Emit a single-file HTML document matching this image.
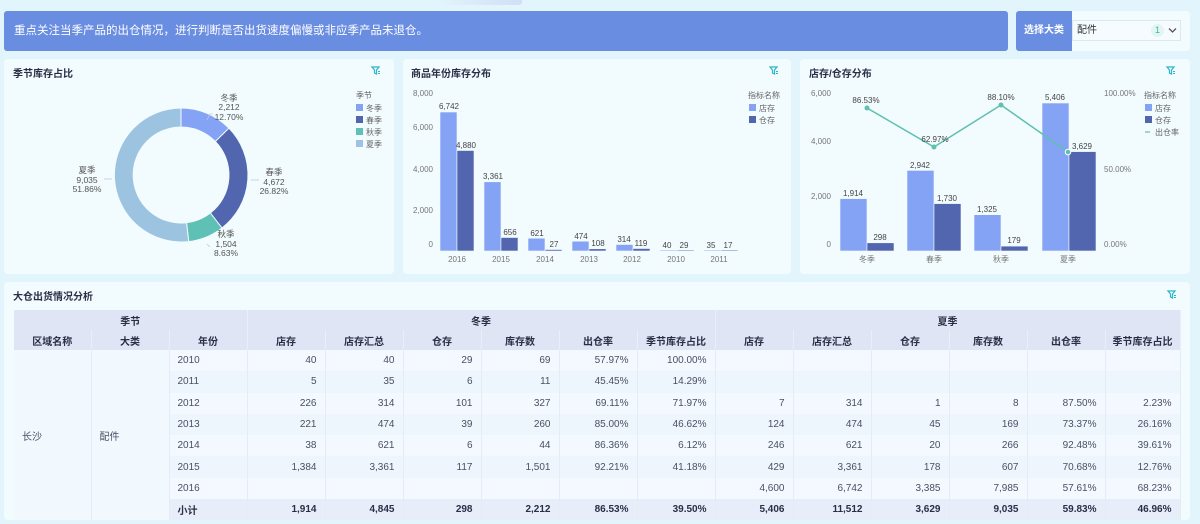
<!DOCTYPE html>
<html><head><meta charset="utf-8"><style>
*{margin:0;padding:0;box-sizing:border-box}
body{width:1200px;height:524px;background:#e2f5fc;font-family:"Liberation Sans","Noto Sans CJK SC",sans-serif;position:relative;overflow:hidden;color:#333}
.p{position:absolute;background:#f2fbfe;border-radius:4px}
.t{position:absolute;font-size:10px;font-weight:bold;color:#2a2f45}
svg text{font-family:"Liberation Sans","Noto Sans CJK SC",sans-serif}
table{position:absolute;left:14px;top:310px;border-collapse:collapse;table-layout:fixed;font-size:10px}
td,th{height:21.3px;border-right:1px solid #e4ecf6;padding:0 8px;color:#4a4f63;white-space:nowrap;overflow:hidden}
th{height:20px;background:#dfe5f4;font-weight:bold;color:#2a2f45;text-align:center;border-right:1px solid #e9eef8;padding:0 4px}
td{text-align:right}
tr.a td{background:#eef6fd}
tr.b td{background:#f3f9fe}
tr.s td{background:#e7eefa;font-weight:bold;color:#2a2f45}
td.l{text-align:left;background:#f2f9fe!important}
td.y{text-align:left}
</style></head><body>
<div style="position:absolute;left:435px;top:0;width:87px;height:5px;background:linear-gradient(90deg,#e2f5fc,#d3def5);border-radius:0 0 3px 3px"></div>
<div style="position:absolute;left:4px;top:11px;width:1004px;height:40px;background:#698de0;border-radius:3px;color:#fff;font-size:11.5px;line-height:40px;padding-left:10px">重点关注当季产品的出仓情况，进行判断是否出货速度偏慢或非应季产品未退仓。</div>
<div class="p" style="left:1016px;top:11px;width:174px;height:40px"></div>
<div style="position:absolute;left:1016px;top:11px;width:56px;height:40px;background:#698de0;border-radius:3px 0 0 3px;color:#fff;font-size:10px;font-weight:bold;line-height:40px;text-align:center">选择大类</div>
<div style="position:absolute;left:1072px;top:20px;width:109px;height:21px;background:#f5fbff;border:1px solid #dde7f1;font-size:10px;line-height:19px;padding-left:4px;color:#333">配件<span style="position:absolute;left:78px;top:3px;width:13px;height:13px;border-radius:7px;background:#e1f5f2;color:#3cb9a8;font-size:9px;line-height:13px;text-align:center">1</span><svg style="position:absolute;left:95px;top:6px" width="9" height="7"><path d="M1 1.5L4.5 5L8 1.5" stroke="#555" stroke-width="1.3" fill="none"/></svg></div>

<div class="p" style="left:4px;top:59px;width:390px;height:215px"></div>
<div class="p" style="left:403px;top:59px;width:388px;height:215px"></div>
<div class="p" style="left:800px;top:59px;width:390px;height:215px"></div>
<div class="p" style="left:4px;top:282px;width:1186px;height:238px"></div>
<div class="t" style="left:13px;top:65px">季节库存占比</div>
<div class="t" style="left:411px;top:65px">商品年份库存分布</div>
<div class="t" style="left:809px;top:65px">店存/仓存分布</div>
<div class="t" style="left:13px;top:288px">大仓出货情况分析</div>

<svg style="position:absolute;left:0;top:0" width="1200" height="524">
<defs><g id="fi"><path d="M0 0H7L4.5 3V7L2.5 6V3Z" fill="none" stroke="#2ab5c8" stroke-width="1.2"/><path d="M6 4.5H8M6 6.5H8" stroke="#2ab5c8" stroke-width="1"/></g></defs>
<use href="#fi" x="372" y="67"/><use href="#fi" x="770" y="67"/><use href="#fi" x="1167" y="67"/><use href="#fi" x="1168" y="291"/>
<g stroke="#f2fbfe" stroke-width="1">
<path d="M181 108A67 67 0 0 1 228.95 128.2L215.35 141.5A48 48 0 0 0 181 127Z" fill="#85a3f5"/>
<path d="M228.95 128.2A67 67 0 0 1 221.97 228L210.35 213A48 48 0 0 0 215.35 141.5Z" fill="#5266b0"/>
<path d="M221.97 228A67 67 0 0 1 188.7 241.6L186.52 222.7A48 48 0 0 0 210.35 213Z" fill="#5fc0b5"/>
<path d="M188.7 241.6A67 67 0 1 1 181 108L181 127A48 48 0 1 0 186.52 222.7Z" fill="#9cc3e0"/>
</g>
<g font-size="8.5" fill="#555" text-anchor="middle">
<text x="229" y="101">冬季</text><text x="229" y="110">2,212</text><text x="229" y="120">12.70%</text>
<text x="274" y="175">春季</text><text x="274" y="185">4,672</text><text x="274" y="194">26.82%</text>
<text x="226" y="237">秋季</text><text x="226" y="247">1,504</text><text x="226" y="256">8.63%</text>
<text x="87" y="173">夏季</text><text x="87" y="183">9,035</text><text x="87" y="192">51.86%</text>
</g>
<g stroke="#bcd" fill="none" stroke-width=".8"><path d="M207 120L210 114H213"/><path d="M251 180H259"/><path d="M207 244L210 247"/><path d="M104 179H112"/></g>
<g font-size="8" fill="#666"><text x="356" y="98">季节</text>
<rect x="356" y="104" width="7" height="7" fill="#85a3f5"/><text x="366" y="111">冬季</text>
<rect x="356" y="116" width="7" height="7" fill="#5266b0"/><text x="366" y="123">春季</text>
<rect x="356" y="128" width="7" height="7" fill="#5fc0b5"/><text x="366" y="135">秋季</text>
<rect x="356" y="140" width="7" height="7" fill="#9cc3e0"/><text x="366" y="147">夏季</text></g>
<g font-size="8" fill="#777" text-anchor="end"><text x="433" y="96">8,000</text><text x="433" y="130">6,000</text><text x="433" y="172">4,000</text><text x="433" y="213">2,000</text><text x="433" y="247">0</text></g>
<g stroke="#f2fbfe" stroke-width=".6">
<rect x="440" y="112" width="17" height="139" fill="#85a3f5"/><rect x="457" y="150.5" width="17" height="100.5" fill="#5266b0"/>
<rect x="484" y="181.8" width="17" height="69.2" fill="#85a3f5"/><rect x="501" y="237.5" width="17" height="13.5" fill="#5266b0"/>
<rect x="528" y="238.2" width="17" height="12.8" fill="#85a3f5"/><rect x="545" y="249.5" width="17" height="1.5" fill="#5266b0"/>
<rect x="572" y="241.2" width="17" height="9.8" fill="#85a3f5"/><rect x="589" y="248.8" width="17" height="2.2" fill="#5266b0"/>
<rect x="616" y="244.5" width="17" height="6.5" fill="#85a3f5"/><rect x="633" y="248.5" width="17" height="2.5" fill="#5266b0"/>
<rect x="660" y="250" width="17" height="1" fill="#85a3f5"/><rect x="677" y="250" width="17" height="1" fill="#5266b0"/>
<rect x="704" y="250" width="17" height="1" fill="#85a3f5"/><rect x="721" y="250" width="17" height="1" fill="#5266b0"/>
</g>
<g font-size="8" fill="#444" text-anchor="middle">
<text x="449" y="109">6,742</text><text x="466" y="148">4,880</text><text x="493" y="179">3,361</text><text x="510" y="235">656</text>
<text x="537" y="236">621</text><text x="554" y="247">27</text><text x="581" y="239">474</text><text x="598" y="246">108</text>
<text x="624" y="242">314</text><text x="641" y="246">119</text><text x="667" y="248">40</text><text x="684" y="248">29</text>
<text x="711" y="248">35</text><text x="728" y="248">17</text></g>
<g font-size="8" fill="#777" text-anchor="middle"><text x="457" y="262">2016</text><text x="501" y="262">2015</text><text x="545" y="262">2014</text><text x="589" y="262">2013</text><text x="632" y="262">2012</text><text x="676" y="262">2010</text><text x="719" y="262">2011</text></g>
<g font-size="8" fill="#666"><text x="748" y="98">指标名称</text>
<rect x="749" y="104" width="7" height="7" fill="#85a3f5"/><text x="759" y="111">店存</text>
<rect x="749" y="116" width="7" height="7" fill="#5266b0"/><text x="759" y="123">仓存</text></g>
<g font-size="8" fill="#777" text-anchor="end"><text x="831" y="96">6,000</text><text x="831" y="144">4,000</text><text x="831" y="199">2,000</text><text x="831" y="247">0</text></g>
<g font-size="8" fill="#777"><text x="1104" y="96">100.00%</text><text x="1104" y="172">50.00%</text><text x="1104" y="247">0.00%</text></g>
<g stroke="#f2fbfe" stroke-width=".6">
<rect x="840" y="198.6" width="27" height="52.4" fill="#85a3f5"/><rect x="867" y="242.8" width="27" height="8.2" fill="#5266b0"/>
<rect x="907" y="170.4" width="27" height="80.6" fill="#85a3f5"/><rect x="934" y="203.6" width="27" height="47.4" fill="#5266b0"/>
<rect x="974" y="214.7" width="27" height="36.3" fill="#85a3f5"/><rect x="1001" y="246.1" width="27" height="4.9" fill="#5266b0"/>
<rect x="1042" y="103" width="27" height="148" fill="#85a3f5"/><rect x="1069" y="151.6" width="27" height="99.4" fill="#5266b0"/>
</g>
<polyline points="867,108 934,147 1001,105 1068,152" fill="none" stroke="#5ec0b0" stroke-width="1.5"/>
<g fill="#5ec0b0"><circle cx="867" cy="108" r="2.5"/><circle cx="934" cy="147" r="2.5"/><circle cx="1001" cy="105" r="2.5"/><circle cx="1068" cy="152" r="2.8" stroke="#fff" stroke-width="1"/></g>
<g font-size="8" fill="#444" text-anchor="middle">
<text x="866" y="103">86.53%</text><text x="935" y="142">62.97%</text><text x="1001" y="100">88.10%</text>
<text x="853" y="196">1,914</text><text x="880" y="240">298</text><text x="920" y="168">2,942</text><text x="947" y="201">1,730</text>
<text x="987" y="212">1,325</text><text x="1014" y="243">179</text><text x="1055" y="100">5,406</text><text x="1082" y="149">3,629</text></g>
<g font-size="8" fill="#777" text-anchor="middle"><text x="867" y="262">冬季</text><text x="934" y="262">春季</text><text x="1001" y="262">秋季</text><text x="1068" y="262">夏季</text></g>
<g font-size="8" fill="#666"><text x="1144" y="98">指标名称</text>
<rect x="1145" y="104" width="7" height="7" fill="#85a3f5"/><text x="1155" y="111">店存</text>
<rect x="1145" y="116" width="7" height="7" fill="#5266b0"/><text x="1155" y="123">仓存</text>
<path d="M1145 132H1150" stroke="#5ec0b0" stroke-width="1.2"/><text x="1155" y="135">出仓率</text></g>
</svg>

<table>
<colgroup><col style="width:77px"><col style="width:78px"><col style="width:78px"><col style="width:78px"><col style="width:78px"><col style="width:78px"><col style="width:78px"><col style="width:78px"><col style="width:78px"><col style="width:78px"><col style="width:78px"><col style="width:78px"><col style="width:78px"><col style="width:78px"><col style="width:75px"></colgroup>
<tr><th colspan="3">季节</th><th colspan="6">冬季</th><th colspan="6">夏季</th></tr>
<tr><th>区域名称</th><th>大类</th><th>年份</th><th>店存</th><th>店存汇总</th><th>仓存</th><th>库存数</th><th>出仓率</th><th>季节库存占比</th><th>店存</th><th>店存汇总</th><th>仓存</th><th>库存数</th><th>出仓率</th><th>季节库存占比</th></tr>
<tr class="b"><td class="l" rowspan="8">长沙</td><td class="l" rowspan="8">配件</td><td class="y">2010</td><td>40</td><td>40</td><td>29</td><td>69</td><td>57.97%</td><td>100.00%</td><td></td><td></td><td></td><td></td><td></td><td></td></tr>
<tr class="a"><td class="y">2011</td><td>5</td><td>35</td><td>6</td><td>11</td><td>45.45%</td><td>14.29%</td><td></td><td></td><td></td><td></td><td></td><td></td></tr>
<tr class="b"><td class="y">2012</td><td>226</td><td>314</td><td>101</td><td>327</td><td>69.11%</td><td>71.97%</td><td>7</td><td>314</td><td>1</td><td>8</td><td>87.50%</td><td>2.23%</td></tr>
<tr class="a"><td class="y">2013</td><td>221</td><td>474</td><td>39</td><td>260</td><td>85.00%</td><td>46.62%</td><td>124</td><td>474</td><td>45</td><td>169</td><td>73.37%</td><td>26.16%</td></tr>
<tr class="b"><td class="y">2014</td><td>38</td><td>621</td><td>6</td><td>44</td><td>86.36%</td><td>6.12%</td><td>246</td><td>621</td><td>20</td><td>266</td><td>92.48%</td><td>39.61%</td></tr>
<tr class="a"><td class="y">2015</td><td>1,384</td><td>3,361</td><td>117</td><td>1,501</td><td>92.21%</td><td>41.18%</td><td>429</td><td>3,361</td><td>178</td><td>607</td><td>70.68%</td><td>12.76%</td></tr>
<tr class="b"><td class="y">2016</td><td></td><td></td><td></td><td></td><td></td><td></td><td>4,600</td><td>6,742</td><td>3,385</td><td>7,985</td><td>57.61%</td><td>68.23%</td></tr>
<tr class="s"><td class="y">小计</td><td>1,914</td><td>4,845</td><td>298</td><td>2,212</td><td>86.53%</td><td>39.50%</td><td>5,406</td><td>11,512</td><td>3,629</td><td>9,035</td><td>59.83%</td><td>46.96%</td></tr>
</table>
</body></html>
